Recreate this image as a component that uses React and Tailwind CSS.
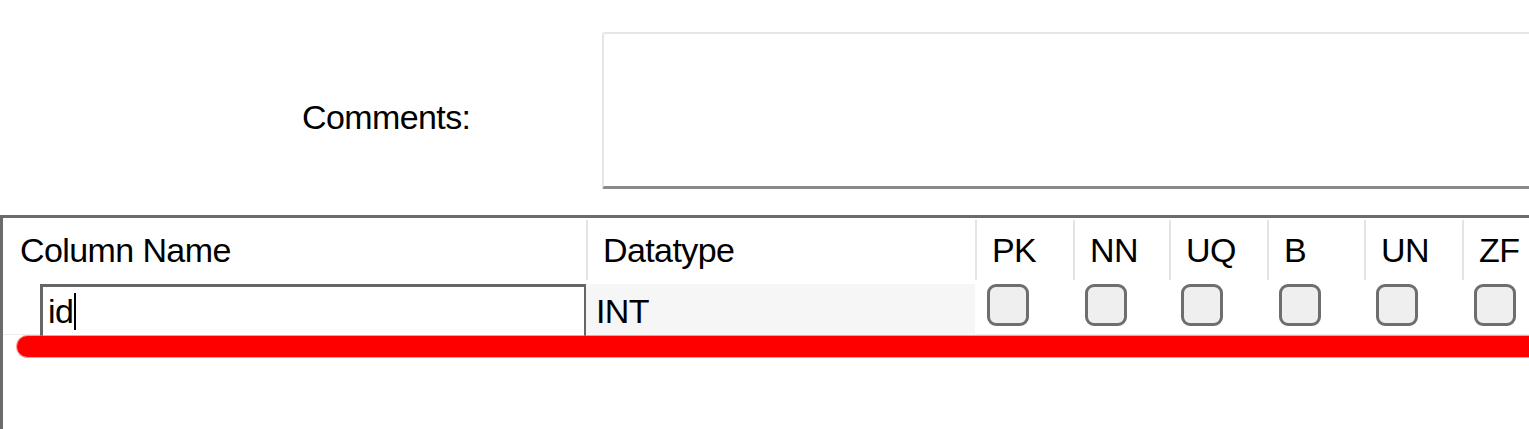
import React from "react";

const cols = "grid grid-cols-[583px_389px_98px_96px_98px_97px_98px_97px]";

function HeadCell({ label }) {
  return (
    <div className="flex">
      <div className="w-[2px] mt-[2px] h-[60px] bg-[#e4e4e4] shrink-0" />
      <div className="pl-[15px] pt-[15px] leading-none">{label}</div>
    </div>
  );
}

function Check() {
  return (
    <div className="pl-[12px]">
      <div className="w-[42px] h-[42px] rounded-[9px] border-[3px] border-[#6e6e6e] bg-[#efefef]" />
    </div>
  );
}

export default function App() {
  const flags = ["PK", "NN", "UQ", "B", "UN", "ZF"];
  return (
    <div className="relative w-[1529px] h-[429px] overflow-hidden bg-white text-black text-[34px] tracking-[-0.6px] font-['Liberation_Sans',Arial,sans-serif]">
      <div className="flex h-[215px]">
        <div className="w-[602px] shrink-0">
          <p className="ml-[302px] mt-[100px] leading-none">Comments:</p>
        </div>
        <div className="mt-[32px] h-[157px] flex-1 border-t-2 border-l-2 border-[#e6e6e6] border-b-[3px] border-b-[#8a8a8a] rounded-tl-[3px] rounded-bl-[2px] bg-white" />
      </div>
      <div className="h-[214px] border-t-[3px] border-l-[3px] border-[#6b6b6b]">
        <div className={`${cols} h-[66px]`}>
          <div className="pl-[17px] pt-[15px] leading-none">Column Name</div>
          <HeadCell label="Datatype" />
          {flags.map((f) => (
            <HeadCell key={f} label={f} />
          ))}
        </div>
        <div className={`${cols} h-[51px] border-b border-[#ececec]`}>
          <div className="pl-[37px]">
            <div className="w-[547px] h-[54px] border-[3px] border-b-0 border-[#666666] pl-[5px] pt-[7px] leading-none flex items-start bg-white">
              <span>id</span>
              <span className="inline-block w-[2px] h-[37px] bg-black ml-[1px] -mt-[1px]" />
            </div>
          </div>
          <div className="bg-[#f6f6f7] pl-[10px] pt-[10px] leading-none">INT</div>
          {flags.map((f) => (
            <Check key={f} />
          ))}
        </div>
      </div>
      <div className="absolute top-[336px] left-[17px] right-[-30px] h-[21px] rounded-full bg-[#ff0000] shadow-[0_0_0_1px_rgba(255,90,90,0.6)]" />
    </div>
  );
}
